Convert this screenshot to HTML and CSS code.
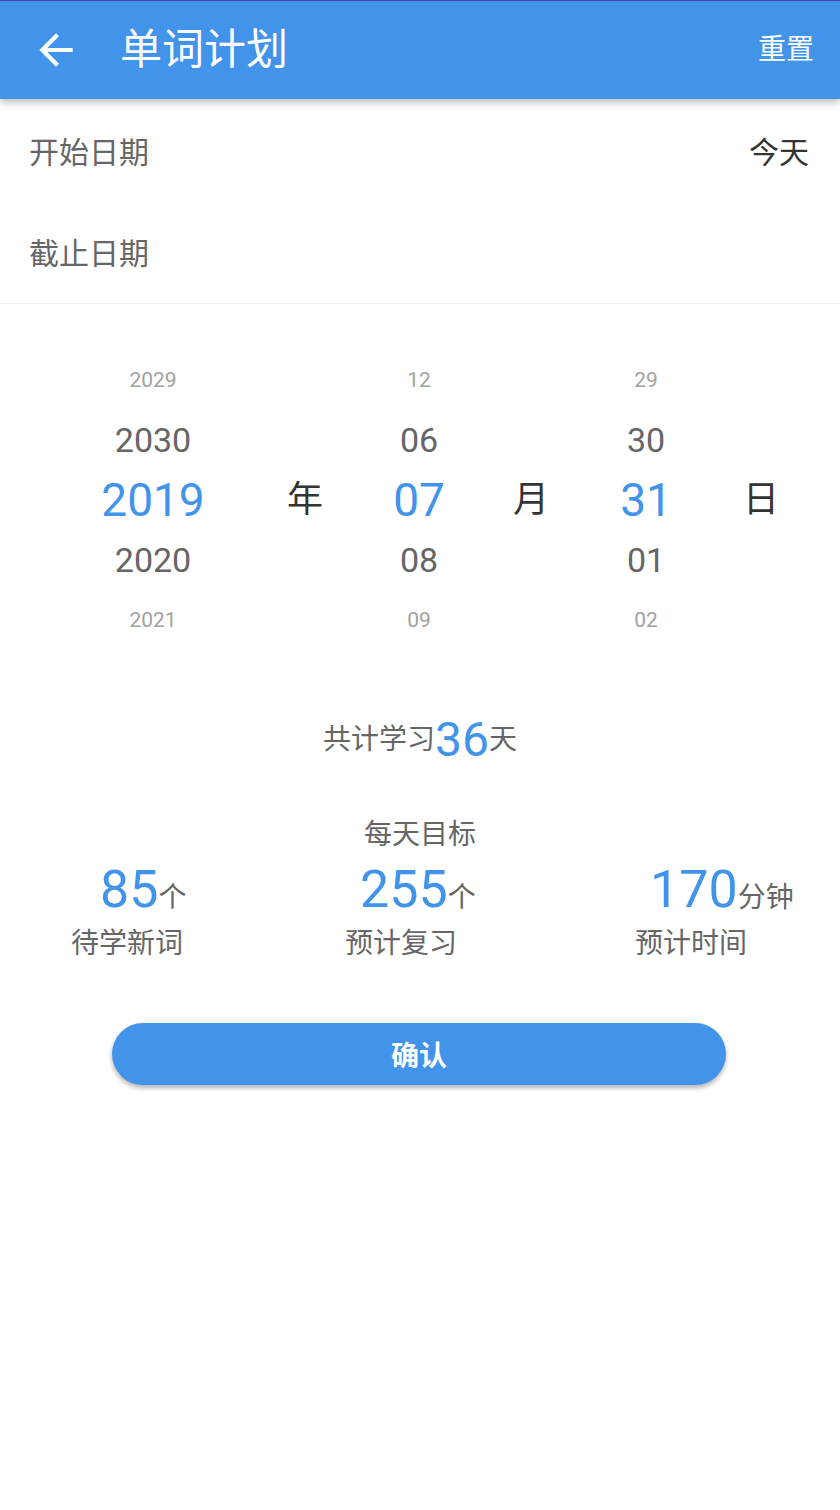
FILE: index.html
```html
<!DOCTYPE html>
<html lang="zh">
<head>
<meta charset="utf-8">
<title>单词计划</title>
<link rel="stylesheet" href="styles.css">
</head>
<body>
<header class="appbar">
  <svg class="back" viewBox="0 0 24 24" width="50" height="50"><path fill="#fff" d="M20 11H7.83l5.59-5.59L12 4l-8 8 8 8 1.41-1.41L7.83 13H20v-2z"/></svg>
  <h1 class="title">单词计划</h1>
  <span class="reset">重置</span>
</header>

<section class="list">
  <div class="row"><span class="row-label">开始日期</span><span class="row-value">今天</span></div>
  <div class="row"><span class="row-label">截止日期</span></div>
</section>

<section class="picker">
  <div class="wheel">
    <div class="w-far">2029</div>
    <div class="w-near">2030</div>
    <div class="w-sel">2019</div>
    <div class="w-near">2020</div>
    <div class="w-far">2021</div>
  </div>
  <div class="unit">年</div>
  <div class="wheel">
    <div class="w-far">12</div>
    <div class="w-near">06</div>
    <div class="w-sel">07</div>
    <div class="w-near">08</div>
    <div class="w-far">09</div>
  </div>
  <div class="unit">月</div>
  <div class="wheel">
    <div class="w-far">29</div>
    <div class="w-near">30</div>
    <div class="w-sel">31</div>
    <div class="w-near">01</div>
    <div class="w-far">02</div>
  </div>
  <div class="unit">日</div>
</section>

<div class="total"><span class="total-text">共计学习</span><span class="total-num">36</span><span class="total-text">天</span></div>

<div class="goal-title">每天目标</div>
<section class="stats">
  <div class="stat stat-1">
    <div class="stat-num"><span class="num">85</span><span class="num-unit">个</span></div>
    <div class="stat-label">待学新词</div>
  </div>
  <div class="stat stat-2">
    <div class="stat-num"><span class="num">255</span><span class="num-unit">个</span></div>
    <div class="stat-label">预计复习</div>
  </div>
  <div class="stat stat-3">
    <div class="stat-num"><span class="num">170</span><span class="num-unit">分钟</span></div>
    <div class="stat-label">预计时间</div>
  </div>
</section>

<div class="actions"><button class="confirm">确认</button></div>
</body>
</html>
```

FILE: styles.css
```css
* { box-sizing: border-box; }
html, body {
  margin: 0;
  padding: 0;
  background: #fff;
  font-family: Roboto, "Noto Sans CJK SC", sans-serif;
}
body { width: 840px; min-height: 1510px; }

.appbar {
  position: relative;
  z-index: 2;
  display: flex;
  align-items: center;
  height: 99px;
  background: #4293ea;
  border-top: 1px solid #3a48b5;
  box-shadow: 0 3px 8px rgba(0, 0, 0, 0.28);
  color: #fff;
}
.back { margin-left: 31px; flex: none; }
.title {
  margin: 0 0 0 39px;
  font-size: 42px;
  font-weight: 400;
  line-height: 52px;
  flex: 1;
}
.reset {
  font-size: 28px;
  line-height: 40px;
  margin-right: 26px;
}

.list {
  padding-bottom: 2px;
  border-bottom: 1px solid #eeeeee;
}
.row {
  display: flex;
  align-items: center;
  justify-content: space-between;
  padding: 0 31px 0 29px;
  font-size: 30px;
  height: 101px;
}
.row-label { color: #666; }
.row-value { color: #333; }

.picker {
  display: grid;
  grid-template-columns: 152px 152px 76px 148px 82px 148px;
  padding: 46px 0 0 77px;
  height: 346px;
}
.wheel {
  display: flex;
  flex-direction: column;
  align-items: center;
}
.wheel > div {
  height: 60px;
  line-height: 60px;
  white-space: nowrap;
}
.w-far { font-size: 21px; color: #a2a2a2; }
.w-near { font-size: 34px; color: #666; }
.w-sel { font-size: 46px; color: #4293ea; }
.unit {
  display: flex;
  align-items: center;
  justify-content: center;
  font-size: 36px;
  line-height: 1;
  color: #333;
}

.total {
  display: flex;
  align-items: center;
  justify-content: center;
  height: 60px;
  margin-top: 60px;
}
.total-text { font-size: 28px; color: #666; line-height: 1; }
.total-num { font-size: 48px; color: #4293ea; line-height: 1; }

.goal-title {
  margin-top: 45px;
  height: 40px;
  line-height: 40px;
  text-align: center;
  font-size: 28px;
  color: #666;
}

.stats {
  display: grid;
  grid-template-columns: 274px 290px 1fr;
  padding-left: 71px;
}
.stat-num {
  display: flex;
  align-items: baseline;
  height: 60px;
  line-height: 60px;
  margin-top: 5px;
  white-space: nowrap;
}
.stat-1 .stat-num { margin-left: 29px; }
.stat-2 .stat-num { margin-left: 15px; }
.stat-3 .stat-num { margin-left: 15px; }
.num { font-size: 52px; color: #4293ea; }
.num-unit { font-size: 28px; color: #666; }
.stat-label {
  margin-top: 4px;
  height: 40px;
  line-height: 40px;
  font-size: 28px;
  color: #666;
  white-space: nowrap;
}

.actions { padding: 59px 0 0 112px; }
.confirm {
  display: block;
  width: 614px;
  height: 62px;
  border: none;
  border-radius: 31px;
  background: #4293ea;
  color: #fff;
  font-family: Roboto, "Noto Sans CJK SC", sans-serif;
  font-size: 28px;
  font-weight: 700;
  box-shadow: 0 3px 5px rgba(0, 0, 0, 0.3);
}
```
